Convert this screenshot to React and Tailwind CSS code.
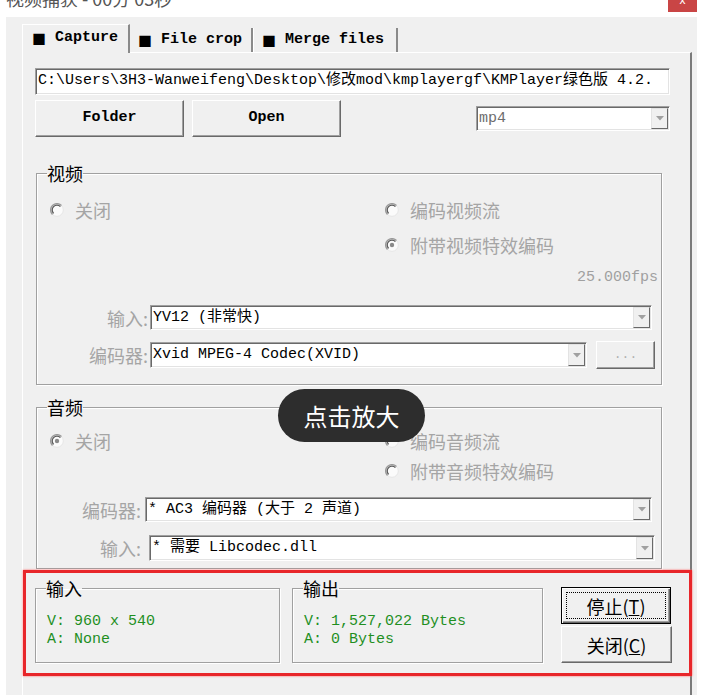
import React from "react";

const mono = "font-['Liberation_Mono','Noto_Sans_CJK_SC',monospace]";
const cjk = "font-['Noto_Sans_CJK_SC',sans-serif]";

function Radio({ checked }) {
  return (
    <svg width="14" height="14" viewBox="0 0 14 14" className="shrink-0 w-[14px] h-[14px]">
      <circle cx="7" cy="7" r="6.3" fill="#fbfbfb" stroke="#e6e6e6" strokeWidth="1" />
      <path d="M11.5 2.5 A6.3 6.3 0 0 0 2.5 11.5" stroke="#9a9a9a" strokeWidth="1.4" fill="none" />
      <path d="M10.4 3.6 A4.8 4.8 0 0 0 3.6 10.4" stroke="#5a5a5a" strokeWidth="1.3" fill="none" />
      {checked && <circle cx="7" cy="7" r="2.2" fill="#8a8a8a" />}
    </svg>
  );
}

function ArrowBtn() {
  return (
    <div className="w-[17px] h-full bg-[#f0f0f0] border border-t-[#e3e3e3] border-l-[#e3e3e3] border-b-[#696969] border-r-[#696969] flex items-center justify-center shrink-0">
      <svg width="8" height="5" viewBox="0 0 8 5">
        <path d="M0 0 L8 0 L4 4.5 Z" fill="#a0a0a0" />
      </svg>
    </div>
  );
}

function Combo({ className, children, gray }) {
  return (
    <div
      className={
        "flex bg-white border border-t-[#a0a0a0] border-l-[#a0a0a0] border-b-white border-r-white shadow-[inset_1px_1px_0_#696969,inset_-1px_-1px_0_#e3e3e3] p-[1px] " +
        className
      }
    >
      <div
        className={
          "flex-1 flex items-center pl-[1px] text-[15px] leading-[18px] whitespace-nowrap overflow-hidden " +
          mono +
          (gray ? " text-[#6d6d6d]" : " text-black")
        }
      >
        {children}
      </div>
      <ArrowBtn />
    </div>
  );
}

const raised =
  "bg-[#f0f0f0] border border-t-white border-l-white border-b-[#696969] border-r-[#696969] shadow-[inset_-1px_-1px_0_#a0a0a0]";

function RadioItem({ checked, children }) {
  return (
    <div className="flex items-center h-[24px]">
      <Radio checked={checked} />
      <span className={"ml-[11px] text-[18px] leading-[24px] text-[#a5a5a5] " + cjk}>{children}</span>
    </div>
  );
}

function Label({ className, children }) {
  return (
    <div className={"text-right text-[18px] leading-[24px] text-[#a5a5a5] " + cjk + " " + className}>
      {children}
    </div>
  );
}

const fieldset =
  "m-0 p-0 min-w-0 border border-[#a0a0a0] shadow-[inset_1px_1px_0_#ffffff,1px_1px_0_#ffffff]";
const legend = "ml-[10px] px-0 text-[18px] leading-[24px] text-black " + cjk;

export default function App() {
  return (
    <div className="relative w-[707px] h-[695px] bg-white overflow-hidden">
      {/* title bar */}
      <div className="flex h-[17px] overflow-hidden">
        <div className={"ml-[6px] -mt-[14px] text-[18px] leading-[24px] text-[#555] " + cjk}>
          视频捕获 - 00分 03秒
        </div>
        <div className="ml-auto mr-[10px] w-[29px] h-[12px] bg-[#c94545] flex justify-center overflow-hidden">
          <span className="text-white text-[12px] leading-[12px] -mt-[6px] font-['Liberation_Sans',sans-serif]">x</span>
        </div>
      </div>

      {/* window body */}
      <div className="ml-[6px] w-[691px] h-[678px] bg-[#f0f0f0] pt-[7px] pl-[16px] flex flex-col">
        {/* tabs */}
        <div className="flex items-end h-[28px]">
          <div
            className={
              "relative z-10 h-[29px] -mb-[1px] w-[108px] bg-[#f0f0f0] border-t border-l border-t-white border-l-white border-r-2 border-r-[#8a8a8a] flex items-center pl-[9px] pb-[2px] text-[15px] font-bold text-black " +
              mono
            }
          >
            <span className="inline-block w-[23px] font-['Noto_Sans_CJK_SC',sans-serif] font-normal text-[14px]">■</span>
            Capture
          </div>
          <div
            className={
              "h-[24px] w-[123px] bg-[#f0f0f0] border-r-2 border-r-[#8a8a8a] flex items-center pl-[8px] text-[15px] font-bold text-black " +
              mono
            }
          >
            <span className="inline-block w-[23px] font-['Noto_Sans_CJK_SC',sans-serif] font-normal text-[14px]">■</span>
            File crop
          </div>
          <div
            className={
              "h-[24px] w-[145px] bg-[#f0f0f0] border-l border-l-white border-r-2 border-r-[#8a8a8a] flex items-center pl-[8px] text-[15px] font-bold text-black " +
              mono
            }
          >
            <span className="inline-block w-[23px] font-['Noto_Sans_CJK_SC',sans-serif] font-normal text-[14px]">■</span>
            Merge files
          </div>
        </div>

        {/* panel */}
        <div className="flex-1 w-[670px] border-t border-l border-t-white border-l-white border-r-2 border-r-[#7a7a7a] pl-[12px] flex flex-col">
          {/* path */}
          <div
            className={
              "mt-[15px] w-[635px] h-[27px] bg-white border border-t-[#a0a0a0] border-l-[#a0a0a0] border-b-white border-r-white shadow-[inset_1px_1px_0_#696969,inset_-1px_-1px_0_#e3e3e3] flex items-center pl-[2px] text-[15px] text-black whitespace-nowrap overflow-hidden " +
              mono
            }
          >
            C:\Users\3H3-Wanweifeng\Desktop\修改mod\kmplayergf\KMPlayer绿色版 4.2.
          </div>

          {/* buttons row */}
          <div className="mt-[5px] flex items-center h-[37px]">
            <div className={raised + " w-[149px] h-[37px] flex items-center justify-center text-[15px] font-bold text-black " + mono}>
              Folder
            </div>
            <div className={raised + " ml-[8px] w-[149px] h-[37px] flex items-center justify-center text-[15px] font-bold text-black " + mono}>
              Open
            </div>
            <Combo className="ml-[135px] w-[194px] h-[25px]" gray>
              mp4
            </Combo>
          </div>

          {/* 视频 */}
          <fieldset className={fieldset + " mt-[24px] ml-[1px] w-[626px]"}>
            <legend className={legend}>视频</legend>
            <div className="pt-[13px] pb-[15px]">
              <div className="flex pl-[13px]">
                <div className="w-[335px]">
                  <RadioItem>关闭</RadioItem>
                </div>
                <RadioItem>编码视频流</RadioItem>
              </div>
              <div className="flex pl-[348px] mt-[11px]">
                <RadioItem checked>附带视频特效编码</RadioItem>
              </div>
              <div className={"mt-[11px] h-[20px] pr-[3px] flex items-center justify-end text-[15px] text-[#a0a0a0] " + mono}>
                25.000fps
              </div>
              <div className="mt-[17px] flex items-center h-[25px]">
                <Label className="w-[111px]">输入:</Label>
                <Combo className="ml-[2px] w-[502px] h-[25px]">YV12 (非常快)</Combo>
              </div>
              <div className="mt-[11px] flex items-center h-[28px]">
                <Label className="w-[111px]">编码器:</Label>
                <Combo className="ml-[2px] w-[437px] h-[26px]">Xvid MPEG-4 Codec(XVID)</Combo>
                <div className={raised + " ml-[9px] w-[59px] h-[28px] flex items-center justify-center text-[13px] text-[#b0b0b0] " + mono}>
                  ...
                </div>
              </div>
            </div>
          </fieldset>

          {/* 音频 */}
          <fieldset className={fieldset + " mt-[10px] ml-[1px] w-[626px]"}>
            <legend className={legend}>音频</legend>
            <div className="pt-[10px] pb-[7px]">
              <div className="flex pl-[13px]">
                <div className="w-[335px]">
                  <RadioItem checked>关闭</RadioItem>
                </div>
                <RadioItem>编码音频流</RadioItem>
              </div>
              <div className="flex pl-[348px] mt-[6px]">
                <RadioItem>附带音频特效编码</RadioItem>
              </div>
              <div className="mt-[14px] flex items-center h-[25px]">
                <Label className="w-[104px]">编码器:</Label>
                <Combo className="ml-[4px] w-[507px] h-[25px]">* AC3 编码器 (大于 2 声道)</Combo>
              </div>
              <div className="mt-[13px] flex items-center h-[26px]">
                <Label className="w-[104px]">输入:</Label>
                <Combo className="ml-[8px] w-[506px] h-[26px]">* 需要 Libcodec.dll</Combo>
              </div>
            </div>
          </fieldset>

          {/* red highlighted status area */}
          <div className="mt-[1px] -ml-[12px] w-[669px] h-[106px] border-[3px] border-[#e8262a] shadow-[0_0_2px_#ff6060] flex items-start pl-[9px] pt-[3px]">
            <fieldset className={fieldset + " w-[245px] h-[87px]"}>
              <legend className={legend}>输入</legend>
              <div className={"pt-[13px] pl-[11px] text-[15px] leading-[18px] text-[#1f8f1f] whitespace-pre " + mono}>
                <div>V: 960 x 540</div>
                <div>A: None</div>
              </div>
            </fieldset>
            <fieldset className={fieldset + " ml-[12px] w-[251px] h-[87px]"}>
              <legend className={legend}>输出</legend>
              <div className={"pt-[13px] pl-[11px] text-[15px] leading-[18px] text-[#1f8f1f] whitespace-pre " + mono}>
                <div>V: 1,527,022 Bytes</div>
                <div>A: 0 Bytes</div>
              </div>
            </fieldset>
            <div className="ml-[18px] mt-[11px] flex flex-col gap-[2px]">
              <div className="w-[110px] h-[37px] border border-black bg-[#f0f0f0] shadow-[inset_1px_1px_0_#ffffff,inset_-1px_-1px_0_#696969,inset_-2px_-2px_0_#a0a0a0] p-[4px]">
                <div className={"w-full h-full border border-dotted border-black flex items-center justify-center text-[18px] leading-[22px] text-black " + cjk}>
                  停止(<span className="underline underline-offset-1">T</span>)
                </div>
              </div>
              <div className={raised + " w-[111px] h-[37px] flex items-center justify-center text-[18px] leading-[22px] text-black " + cjk}>
                关闭(<span className="underline underline-offset-1">C</span>)
              </div>
            </div>
          </div>
        </div>
      </div>

      {/* overlay tooltip */}
      <div className={"absolute left-[278px] top-[389px] w-[147px] h-[53px] rounded-[27px] bg-[#2d2d2d] flex items-center justify-center text-white text-[24px] leading-[30px] " + cjk}>
        点击放大
      </div>
    </div>
  );
}
